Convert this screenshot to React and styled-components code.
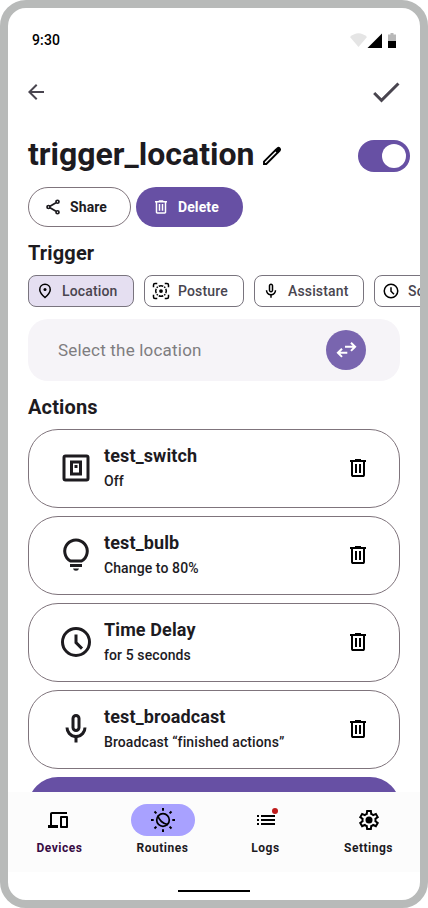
import React from "react";
import styled, { createGlobalStyle } from "styled-components";

const Global = createGlobalStyle`
  *, *::before, *::after { box-sizing: border-box; }
  body { margin: 0; background: #fff; font-family: Roboto, "Liberation Sans", sans-serif; color: #1d1b1f; }
  button { font: inherit; color: inherit; border: 0; padding: 0; background: none; }
  h1, h2, h3, p { margin: 0; }
`;

const Device = styled.div`
  width: 428px;
  height: 908px;
  border: 8px solid #b8bab9;
  border-radius: 26px;
  background: #fff;
  overflow: hidden;
  display: flex;
  flex-direction: column;
`;

const StatusBar = styled.div`
  flex: none;
  height: 52px;
  padding: 12px 24px 0;
  display: flex;
  align-items: center;
  justify-content: space-between;
  font-size: 14px;
  font-weight: 500;
  letter-spacing: 0.14px;
  line-height: 20px;
  color: #000;
`;

const StatusIcons = styled.svg`
  width: 46px;
  height: 16px;
  margin-top: 2px;
`;

const AppBar = styled.header`
  flex: none;
  height: 64px;
  padding: 0 16px;
  display: flex;
  align-items: center;
  justify-content: space-between;
  color: #49454f;
`;

const IconButton = styled.button`
  display: flex;
  color: ${(p) => p.$color || "inherit"};
`;

const Svg = styled.svg`
  display: block;
  flex: none;
  width: ${(p) => p.$size}px;
  height: ${(p) => p.$size}px;
  overflow: visible;
`;

const Content = styled.main`
  flex: 1;
  min-height: 0;
  padding: 12px 0 0 20px;
  overflow: hidden;
`;

const TitleRow = styled.div`
  display: flex;
  align-items: center;
  height: 40px;
  padding-right: 10px;
`;

const Title = styled.h1`
  width: 232px;
  font-size: 32px;
  font-weight: 700;
  line-height: 36px;
  margin: -4px 0 0 0;
`;

const Toggle = styled.button`
  width: 52px;
  height: 32px;
  margin-left: auto;
  padding: 4px;
  display: flex;
  justify-content: flex-end;
  border-radius: 16px;
  background: #6750a4;
`;

const Knob = styled.span`
  width: 24px;
  height: 24px;
  border-radius: 50%;
  background: #fff;
`;

const ButtonRow = styled.div`
  display: flex;
  gap: 5px;
  margin-top: 11px;
`;

const PillButton = styled.button`
  width: ${(p) => p.$width}px;
  height: 40px;
  padding-left: ${(p) => (p.$filled ? 16 : 15)}px;
  display: flex;
  align-items: center;
  gap: 8px;
  border-radius: 20px;
  border: ${(p) => (p.$filled ? "0" : "1px solid #7f747c")};
  background: ${(p) => (p.$filled ? "#6750a4" : "#fff")};
  color: ${(p) => (p.$filled ? "#fff" : "#1d1b1f")};
  font-size: 14px;
  font-weight: 700;
  letter-spacing: 0.1px;
`;

const Heading = styled.h2`
  height: 48px;
  padding-top: ${(p) => p.$top}px;
  font-size: 20px;
  line-height: 26px;
  font-weight: 700;
  letter-spacing: 0.14px;
`;

const Chips = styled.div`
  display: flex;
  gap: 10px;
  overflow: hidden;
`;

const Chip = styled.button`
  flex: none;
  width: ${(p) => p.$width}px;
  height: 32px;
  padding-left: 7px;
  display: flex;
  align-items: center;
  gap: 8px;
  border: 1px solid #79747e;
  border-radius: 8px;
  background: ${(p) => (p.$selected ? "#e5dff1" : "#fff")};
  color: #49454f;
  font-size: 14px;
  font-weight: 500;
  letter-spacing: 0.15px;

  svg { color: #000; }
`;

const Picker = styled.div`
  width: 372px;
  height: 62px;
  margin-top: 12px;
  padding: 0 34px 0 30px;
  display: flex;
  align-items: center;
  justify-content: space-between;
  border-radius: 20px;
  background: #f6f4f8;
  color: #7f7d80;
  font-size: 17px;
  font-weight: 400;
  letter-spacing: 0.2px;
`;

const SwapButton = styled.button`
  width: 40px;
  height: 40px;
  display: flex;
  align-items: center;
  justify-content: center;
  border-radius: 50%;
  background: #7965af;
  color: #fff;
`;

const Cards = styled.div`
  width: 372px;
  display: flex;
  flex-direction: column;
  gap: 8px;
`;

const Card = styled.article`
  height: 79px;
  padding: 0 29px 1px;
  display: flex;
  align-items: center;
  border: 1px solid #7f747c;
  border-radius: 30px;
`;

const CardText = styled.div`
  flex: 1;
  padding: 0 0 1px 10px;
`;

const CardTitle = styled.h3`
  font-size: 18px;
  line-height: 24px;
  font-weight: 700;
  letter-spacing: 0.12px;
`;

const CardDetail = styled.p`
  margin-top: 3px;
  font-size: 14px;
  line-height: 20px;
  font-weight: 500;
  letter-spacing: 0.1px;
`;

const AddCard = styled.button`
  height: 79px;
  border-radius: 30px;
  background: #6750a4;
`;

const Nav = styled.nav`
  flex: none;
  height: 80px;
  display: grid;
  grid-template-columns: repeat(4, 1fr);
  background: #fcfcfc;
`;

const NavItem = styled.button`
  padding-top: 12px;
  display: flex;
  flex-direction: column;
  align-items: center;
  gap: 4px;
  color: ${(p) => p.$color || "#1d1b1f"};
  font-size: 12px;
  font-weight: 700;
  line-height: 16px;
  letter-spacing: 0.5px;
`;

const Indicator = styled.span`
  width: 64px;
  height: 32px;
  padding-left: ${(p) => p.$left}px;
  display: flex;
  align-items: center;
  border-radius: 16px;
  background: ${(p) => (p.$active ? "#a8a1ff" : "transparent")};
  color: #000;
`;

const HomeArea = styled.div`
  flex: none;
  height: 28px;
  padding-top: 18px;
  display: flex;
  justify-content: center;
`;

const HomeHandle = styled.div`
  width: 72px;
  height: 2px;
  background: #000;
`;

const outline = (content, width = 2) => (
  <g fill="none" stroke="currentColor" strokeWidth={width}>{content}</g>
);

const symbol = (d) => <path transform="scale(.025) translate(0 960)" fill="currentColor" d={d} />;

const drawings = {
  back: <path fill="currentColor" d="M20 11H7.83l5.59-5.59L12 4l-8 8 8 8 1.41-1.41L7.83 13H20z" />,
  check: <path fill="currentColor" d="M9 16.17L4.83 12l-1.42 1.41L9 19 21 7l-1.41-1.41z" />,
  edit: <>
    {outline(<path d="M4 20v-2.300L15.500 6.200l2.300 2.300L6.300 20z" />, 1.9)}
    <path fill="currentColor" d="M14.800 5.500l2.200-2.100q1.800-1.200 3.300.3t.3 3.300L18.500 9.200z" />
  </>,
  share: outline(<>
    <circle cx="18" cy="5" r="2" /><circle cx="6" cy="12" r="2" /><circle cx="18" cy="19" r="2" />
    <path d="M16 6.2 8 10.9M8 13.1l8 4.7" />
  </>, 2.3),
  trash: symbol("M280-120q-33 0-56.5-23.5T200-200v-520h-40v-80h200v-40h240v40h200v80h-40v520q0 33-23.5 56.5T680-120H280Zm400-600H280v520h400v-520ZM360-280h80v-360h-80v360Zm160 0h80v-360h-80v360Z"),
  pin: <>
    {outline(<path d="M12 20.7c4.7-4.3 7-7.700 7-10.500C19 6 15.900 3 12 3s-7 3-7 7.200c0 2.800 2.300 6.200 7 10.500z" />)}
    <circle cx="12" cy="10" r="2" fill="currentColor" />
  </>,
  posture: <>
    {outline(<>
      <path d="M2 7V4q0-2 2-2h3M17 2h3q2 0 2 2v3M22 17v3q0 2-2 2h-3M7 22H4q-2 0-2-2v-3" />
      <path d="M9 5.600Q12 4.200 15 5.600M18.400 9q1.400 3 0 6M15 18.400q-3 1.400-6 0M5.600 15q-1.400-3 0-6M6.300 7.700l1.400-1.400M16.300 6.300l1.400 1.400M17.700 16.300l-1.400 1.400M7.700 17.700l-1.400-1.400" />
    </>)}
    <circle cx="12" cy="12" r="2.500" fill="currentColor" />
  </>,
  mic: symbol("M480-400q-50 0-85-35t-35-85v-240q0-50 35-85t85-35q50 0 85 35t35 85v240q0 50-35 85t-85 35Zm-40 280v-123q-104-14-172-93t-68-184h80q0 83 58.500 141.500T480-320q83 0 141.500-58.500T680-520h80q0 105-68 184t-172 93v123h-80Zm40-360q17 0 28.500-11.500T520-520v-240q0-17-11.500-28.500T480-800q-17 0-28.500 11.500T440-760v240q0 17 11.500 28.500T480-480Z"),
  clock: outline(<><circle cx="12" cy="12" r="9" /><path d="M12 7v5.400l4 4" /></>),
  swap: outline(<path d="M11 8.800h10M17 4.700l4.100 4.100L17 12.900M13.300 14.800H4M8 10.700l-4.100 4.100L8 18.900" />, 2),
  outlet: <>
    {outline(<><rect x="4" y="4" width="16" height="16" rx="1" /><rect x="9" y="8" width="6" height="8" /></>)}
    <path fill="currentColor" d="M11 10h2v2h-2z" />
  </>,
  bulb: <>
    {outline(<path d="M8.300 17.100A7.500 7.500 0 1 1 15.700 17.100z" transform="translate(0 -1.100)" />)}
    <path fill="currentColor" d="M8 18h8v2H8zM10 21h4q-.3 1.500-2 1.500T10 21z" />
  </>,
  devices: symbol("M80-160v-120h80v-440q0-33 23.500-56.500T240-800h600v80H240v440h240v120H80Zm520 0q-17 0-28.500-11.500T560-200v-400q0-17 11.500-28.500T600-640h240q17 0 28.500 11.500T880-600v400q0 17-11.500 28.500T840-160H600Zm40-80h160v-320H640v320Z"),
  routine: outline(<>
    <circle cx="12" cy="12" r="6.300" />
    <path d="M7 7.500Q7.500 11 10.400 13.500T17 16.600" />
    <path strokeWidth="2" d="M12 0v2.700M12 21.300V24M0 12h2.700M21.300 12H24M3.500 3.500l1.900 1.900M18.600 18.600l1.900 1.900M20.500 3.500l-1.900 1.900M5.400 18.600l-1.900 1.900" />
  </>, 1.7),
  logs: <>
    <path fill="currentColor" d="M3 7h2v2H3zM3 11h2v2H3zM3 15h2v2H3zM7 7h14v2H7zM7 11h14v2H7zM7 15h14v2H7z" />
    <circle cx="21" cy="3" r="3" fill="#bf1b1b" />
  </>,
  settings: <>
    {symbol("m370-80-16-128q-13-5-24.500-12T307-235l-119 50L78-375l103-78q-1-7-1-13.500v-27q0-6.500 1-13.500L78-585l110-190 119 50q11-8 23-15t24-12l16-128h220l16 128q13 5 24.500 12t22.500 15l119-50 110 190-103 78q1 7 1 13.500v27q0 6.500-2 13.500l103 78-110 190-118-50q-11 8-23 15t-24 12L590-80H370Zm70-80h79l14-106q31-8 57.500-23.500T639-327l99 41 39-68-86-65q5-14 7-29.500t2-31.500q0-16-2-31.500t-7-29.500l86-65-39-68-99 42q-22-23-48.500-38.500T533-694l-13-106h-79l-14 106q-31 8-57.500 23.500T321-633l-99-41-39 68 86 64q-5 15-7 30t-2 32q0 16 2 31t7 30l-86 65 39 68 99-42q22 23 48.500 38.500T427-266l13 106Z")}
    <circle cx="12" cy="12" r="3.500" fill="currentColor" />
  </>,
};

const Icon = ({ name, size = 24 }) => (
  <Svg $size={size} viewBox="0 0 24 24" aria-hidden="true">{drawings[name]}</Svg>
);

const triggers = [
  { label: "Location", icon: "pin", width: 106, selected: true },
  { label: "Posture", icon: "posture", width: 100 },
  { label: "Assistant", icon: "mic", width: 110 },
  { label: "Schedule", icon: "clock", width: 110 },
];

const actions = [
  { title: "test_switch", detail: "Off", icon: "outlet" },
  { title: "test_bulb", detail: "Change to 80%", icon: "bulb" },
  { title: "Time Delay", detail: "for 5 seconds", icon: "clock" },
  { title: "test_broadcast", detail: "Broadcast “finished actions”", icon: "mic" },
];

const tabs = [
  { label: "Devices", icon: "devices", color: "#370b43", left: 18.5 },
  { label: "Routines", icon: "routine", active: true, left: 20 },
  { label: "Logs", icon: "logs", left: 20.5 },
  { label: "Settings", icon: "settings", left: 20 },
];

export default function App() {
  return (
    <>
      <Global />
      <Device>
        <StatusBar>
          <span>9:30</span>
          <StatusIcons viewBox="0 0 46 16" aria-hidden="true">
            <path fill="#e5e5e5" d="M0 4Q8.500-3.500 17 4L8.500 14z" />
            <path d="M17.500 15H32V.5z" />
            <path fill="#b8b8b8" d="M38 8V1.500h2.500V0h3v1.500H46V8z" />
            <path d="M38 8h8v7h-8z" />
          </StatusIcons>
        </StatusBar>
        <AppBar>
          <IconButton aria-label="Back"><Icon name="back" /></IconButton>
          <IconButton aria-label="Save"><Icon name="check" size={36} /></IconButton>
        </AppBar>
        <Content>
          <TitleRow>
            <Title>trigger_location</Title>
            <IconButton aria-label="Rename" $color="#000"><Icon name="edit" /></IconButton>
            <Toggle role="switch" aria-checked="true" aria-label="Enabled"><Knob /></Toggle>
          </TitleRow>
          <ButtonRow>
            <PillButton $width={103}><Icon name="share" size={18} />Share</PillButton>
            <PillButton $width={107} $filled><Icon name="trash" size={18} />Delete</PillButton>
          </ButtonRow>
          <Heading $top={13}>Trigger</Heading>
          <Chips>
            {triggers.map((t) => (
              <Chip key={t.label} $width={t.width} $selected={t.selected}>
                <Icon name={t.icon} size={18} />{t.label}
              </Chip>
            ))}
          </Chips>
          <Picker>
            Select the location
            <SwapButton aria-label="Change location"><Icon name="swap" size={24} /></SwapButton>
          </Picker>
          <Heading $top={13}>Actions</Heading>
          <Cards>
            {actions.map((a) => (
              <Card key={a.title}>
                <Icon name={a.icon} size={36} />
                <CardText>
                  <CardTitle>{a.title}</CardTitle>
                  <CardDetail>{a.detail}</CardDetail>
                </CardText>
                <IconButton aria-label="Delete action" $color="#000"><Icon name="trash" /></IconButton>
              </Card>
            ))}
            <AddCard aria-label="Add action" />
          </Cards>
        </Content>
        <Nav>
          {tabs.map((t) => (
            <NavItem key={t.label} $color={t.color}>
              <Indicator $active={t.active} $left={t.left}><Icon name={t.icon} /></Indicator>
              {t.label}
            </NavItem>
          ))}
        </Nav>
        <HomeArea><HomeHandle /></HomeArea>
      </Device>
    </>
  );
}
